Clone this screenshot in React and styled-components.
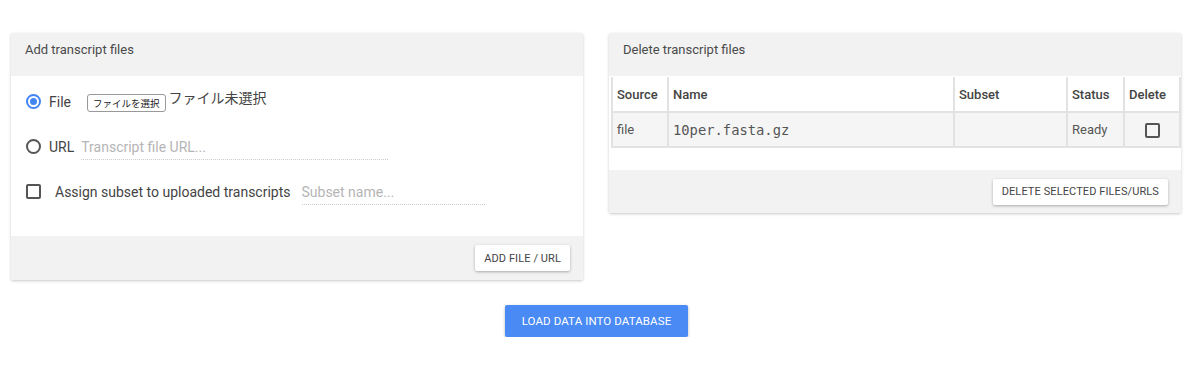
import React from 'react'
import styled, { createGlobalStyle } from 'styled-components'

const Global = createGlobalStyle`
  body {
    margin: 0;
    background: #ffffff;
    font-family: Roboto, "Noto Sans CJK JP", sans-serif;
    color: #444;
  }
`

const Page = styled.div`
  padding: 33px 18px 0 11px;
`
const Cards = styled.div`
  display: flex;
  gap: 26px;
  align-items: flex-start;
`
const Card = styled.div`
  width: 572px;
  background: #fff;
  box-shadow: 0 1px 3px rgba(0,0,0,0.22);
  border-radius: 2px;
`
const CardHeader = styled.div`
  height: 43px;
  box-sizing: border-box;
  background: #f2f2f2;
  padding: 9px 14px 0;
  font-size: 13px;
  line-height: 16px;
  color: #4a4a4a;
`
const CardFooter = styled.div`
  height: ${p => p.h || 44}px;
  background: #f2f2f2;
  display: flex;
  justify-content: flex-end;
  align-items: center;
  padding: 0 13px;
`
const FlatButton = styled.button`
  background: #fff;
  border: none;
  border-radius: 2px;
  box-shadow: 0 1px 3px rgba(0,0,0,0.3);
  font-family: Roboto, sans-serif;
  font-size: 11px;
  color: #444;
  height: 26px;
  padding: 0 9px;
  text-transform: uppercase;
  letter-spacing: 0.1px;
`
const Body = styled.div`
  height: 160px;
  padding: 3px 15px 0 15px;
  box-sizing: border-box;
  display: flex;
  flex-direction: column;
`
const Row = styled.div`
  height: 45px;
  display: flex;
  align-items: center;
  font-size: 14px;
  color: #444;
`
const Radio = styled.span`
  width: 15px;
  height: 15px;
  box-sizing: border-box;
  border-radius: 50%;
  border: 2px solid ${p => (p.checked ? '#4285f4' : '#555')};
  display: inline-flex;
  align-items: center;
  justify-content: center;
  margin-right: 8px;
  &::after {
    content: '';
    width: 7px;
    height: 7px;
    border-radius: 50%;
    background: ${p => (p.checked ? '#4285f4' : 'transparent')};
  }
`
const Check = styled.span`
  width: 15px;
  height: 15px;
  box-sizing: border-box;
  border: 2px solid #555;
  border-radius: 2px;
  display: inline-block;
  vertical-align: middle;
  margin-right: ${p => p.mr || 0}px;
`
const Label = styled.span`
  margin-right: ${p => p.mr || 0}px;
`
const ChooseButton = styled.span`
  font-size: 9.5px;
  color: #222;
  border: 1px solid #999;
  border-radius: 3px;
  padding: 1px 5px;
  background: #fff;
  margin-right: 3px;
  margin-top: 3px;
`
const NoFile = styled.span`
  font-size: 14px;
  color: #444;
  margin-top: -9px;
`
const TextInput = styled.input`
  width: ${p => p.w}px;
  border: none;
  border-bottom: 1px dotted #ccc;
  font-family: Roboto, sans-serif;
  font-size: 14px;
  line-height: 16px;
  padding: 0 0 4px;
  margin-top: 5px;
  outline: none;
  color: #444;
  &::placeholder {
    color: #b5b5b5;
  }
`
const Table = styled.table`
  width: 568px;
  margin: 1px 2px 0;
  border-collapse: collapse;
  table-layout: fixed;
  font-size: 13px;
`
const Th = styled.th`
  height: 34px;
  border: 2px solid #e2e2e2;
  border-top: none;
  text-align: left;
  font-weight: 500;
  color: #444;
  padding: 0 4px;
`
const Td = styled.td`
  height: 33px;
  border: 2px solid #e2e2e2;
  background: #f5f5f5;
  padding: 0 4px;
  color: #555;
  text-align: ${p => p.align || 'left'};
  font-family: ${p => (p.mono ? '"DejaVu Sans Mono", monospace' : 'inherit')};
  font-size: ${p => (p.mono ? '13.8px' : '13px')};
`
const Spacer = styled.div`
  height: 22px;
`
const LoadRow = styled.div`
  display: flex;
  justify-content: center;
  padding-top: 25px;
`
const PrimaryButton = styled.button`
  width: 183px;
  height: 32px;
  background: #4a8af4;
  color: #fff;
  border: none;
  border-radius: 2px;
  box-shadow: 0 1px 3px rgba(0,0,0,0.3);
  font-family: Roboto, sans-serif;
  font-size: 11.5px;
  letter-spacing: 0.1px;
`

const columns = [
  { name: 'Source', w: 56 },
  { name: 'Name', w: 286 },
  { name: 'Subset', w: 113 },
  { name: 'Status', w: 57 },
  { name: 'Delete', w: 56 },
]

export default function App() {
  return (
    <Page>
      <Global />
      <Cards>
        <Card>
          <CardHeader>Add transcript files</CardHeader>
          <Body>
            <Row>
              <Radio checked />
              <Label mr={16}>File</Label>
              <ChooseButton>ファイルを選択</ChooseButton>
              <NoFile>ファイル未選択</NoFile>
            </Row>
            <Row>
              <Radio />
              <Label mr={7}>URL</Label>
              <TextInput w={307} placeholder="Transcript file URL..." />
            </Row>
            <Row>
              <Check mr={14} />
              <Label mr={11}>Assign subset to uploaded transcripts</Label>
              <TextInput w={183} placeholder="Subset name..." />
            </Row>
          </Body>
          <CardFooter>
            <FlatButton>Add file / URL</FlatButton>
          </CardFooter>
        </Card>
        <Card>
          <CardHeader>Delete transcript files</CardHeader>
          <Table>
            <colgroup>
              {columns.map(c => <col key={c.name} style={{ width: c.w }} />)}
            </colgroup>
            <thead>
              <tr>
                {columns.map(c => <Th key={c.name}>{c.name}</Th>)}
              </tr>
            </thead>
            <tbody>
              <tr>
                <Td>file</Td>
                <Td mono>10per.fasta.gz</Td>
                <Td />
                <Td>Ready</Td>
                <Td align="center"><Check /></Td>
              </tr>
            </tbody>
          </Table>
          <Spacer />
          <CardFooter h={43}>
            <FlatButton>Delete selected files/urls</FlatButton>
          </CardFooter>
        </Card>
      </Cards>
      <LoadRow>
        <PrimaryButton>LOAD DATA INTO DATABASE</PrimaryButton>
      </LoadRow>
    </Page>
  )
}
